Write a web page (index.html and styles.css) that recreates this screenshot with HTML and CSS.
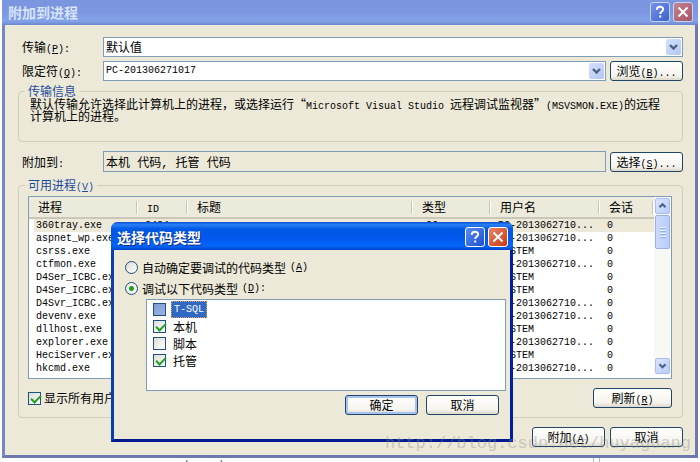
FILE: index.html
```html
<!DOCTYPE html>
<html lang="zh-CN">
<head>
  <meta charset="UTF-8">
  <meta name="viewport" content="width=device-width, initial-scale=1.0">
  <title>附加到进程</title>
  <link rel="stylesheet" href="styles.css">
</head>
<body>
  <main class="window">
    <header class="titlebar">
      <h1>附加到进程</h1>
      <button class="caption help" aria-label="帮助"><svg viewBox="0 0 20 20"><path d="M6.5 7.5C6.5 3 13.5 3 13.5 7.2C13.5 9.5 10.2 9.5 10.2 12.2M10.2 14V16.2"/></svg></button>
      <button class="caption close" aria-label="关闭"><svg viewBox="0 0 20 20"><path d="M5 5L15 15M15 5L5 15"/></svg></button>
    </header>

    <div class="content">
      <div class="form">
        <label for="transport">传输<span class="en">(<u>P</u>):</span></label>
        <div class="combo wide">
          <select id="transport"><option>默认值</option></select>
          <span class="arrow"><svg viewBox="0 0 15 16"><path d="M4 6L7.5 9.5L11 6"/></svg></span>
        </div>
        <label for="qualifier">限定符<span class="en">(<u>Q</u>):</span></label>
        <div class="combo">
          <select id="qualifier" class="en"><option>PC-201306271017</option></select>
          <span class="arrow"><svg viewBox="0 0 15 16"><path d="M4 6L7.5 9.5L11 6"/></svg></span>
        </div>
        <button class="btn">浏览<span class="en">(<u>B</u>)...</span></button>
      </div>

      <fieldset class="info">
        <legend>传输信息</legend>
        <p>默认传输允许选择此计算机上的进程，或选择运行“<span class="en">Microsoft Visual Studio </span>远程调试监视器”<span class="en">(MSVSMON.EXE)</span>的远程<br>计算机上的进程。</p>
      </fieldset>

      <div class="form attach">
        <label for="attach">附加到<span class="en">:</span></label>
        <input id="attach" type="text" value="本机 代码, 托管 代码" readonly>
        <button class="btn">选择<span class="en">(<u>S</u>)...</span></button>
      </div>

      <fieldset class="processes">
        <legend>可用进程<span class="en">(<u>V</u>)</span></legend>
        <div class="list">
          <table>
            <colgroup><col class="c-name"><col class="c-id"><col><col class="c-type"><col class="c-user"><col class="c-session"></colgroup>
            <thead>
              <tr><th>进程</th><th><span class="en">ID</span></th><th>标题</th><th>类型</th><th>用户名</th><th>会话</th></tr>
            </thead>
            <tbody class="en">
              <tr class="current"><td>360tray.exe</td><td>2484</td><td></td><td>x86</td><td>PC-2013062710...</td><td>0</td></tr>
              <tr><td>aspnet_wp.exe</td><td></td><td></td><td></td><td>PC-2013062710...</td><td>0</td></tr>
              <tr><td>csrss.exe</td><td></td><td></td><td></td><td>SYSTEM</td><td>0</td></tr>
              <tr><td>ctfmon.exe</td><td></td><td></td><td></td><td>PC-2013062710...</td><td>0</td></tr>
              <tr><td>D4Ser_ICBC.exe</td><td></td><td></td><td></td><td>SYSTEM</td><td>0</td></tr>
              <tr><td>D4Ser_ICBC.exe</td><td></td><td></td><td></td><td>SYSTEM</td><td>0</td></tr>
              <tr><td>D4Svr_ICBC.exe</td><td></td><td></td><td></td><td>PC-2013062710...</td><td>0</td></tr>
              <tr><td>devenv.exe</td><td></td><td></td><td></td><td>PC-2013062710...</td><td>0</td></tr>
              <tr><td>dllhost.exe</td><td></td><td></td><td></td><td>SYSTEM</td><td>0</td></tr>
              <tr><td>explorer.exe</td><td></td><td></td><td></td><td>PC-2013062710...</td><td>0</td></tr>
              <tr><td>HeciServer.exe</td><td></td><td></td><td></td><td>SYSTEM</td><td>0</td></tr>
              <tr><td>hkcmd.exe</td><td></td><td></td><td></td><td>PC-2013062710...</td><td>0</td></tr>
            </tbody>
          </table>
          <div class="scrollbar">
            <button class="scroll-btn" aria-label="向上"><svg viewBox="0 0 15 16"><path d="M4 9.5L7.5 6L11 9.5"/></svg></button>
            <div class="thumb"><i></i><i></i><i></i><i></i></div>
            <button class="scroll-btn down" aria-label="向下"><svg viewBox="0 0 15 16"><path d="M4 6L7.5 9.5L11 6"/></svg></button>
          </div>
        </div>
        <div class="list-actions">
          <label class="check"><input type="checkbox" checked>显示所有用户</label>
          <button class="btn refresh">刷新<span class="en">(<u>R</u>)</span></button>
        </div>
      </fieldset>

      <div class="footer">
        <button class="btn">附加<span class="en">(<u>A</u>)</span></button>
        <button class="btn">取消</button>
      </div>
    </div>
  </main>

  <div class="behind"><span>(</span><span>)</span><i></i></div>

  <section class="dialog" role="dialog" aria-labelledby="dialog-title">
    <header class="titlebar active">
      <h2 id="dialog-title">选择代码类型</h2>
      <button class="caption help" aria-label="帮助"><svg viewBox="0 0 20 20"><path d="M6.5 7.5C6.5 3 13.5 3 13.5 7.2C13.5 9.5 10.2 9.5 10.2 12.2M10.2 14V16.2"/></svg></button>
      <button class="caption close" aria-label="关闭"><svg viewBox="0 0 20 20"><path d="M5 5L15 15M15 5L5 15"/></svg></button>
    </header>
    <div class="dialog-body">
      <label class="radio"><input type="radio" name="mode">自动确定要调试的代码类型<span class="en">(<u>A</u>)</span></label>
      <label class="radio"><input type="radio" name="mode" checked>调试以下代码类型<span class="en">(<u>D</u>):</span></label>
      <div class="types">
        <label class="check selected"><input type="checkbox"><span class="en">T-SQL</span></label>
        <label class="check"><input type="checkbox" checked>本机</label>
        <label class="check"><input type="checkbox">脚本</label>
        <label class="check"><input type="checkbox" checked>托管</label>
      </div>
      <div class="dialog-actions">
        <button class="btn default">确定</button>
        <button class="btn">取消</button>
      </div>
    </div>
  </section>

  <div class="watermark">http://blog.csdn.net/huyaguang</div>
</body>
</html>
```
FILE: styles.css
```css
* {
  box-sizing: border-box;
}

body {
  margin: 0;
  background: #fff;
  color: #000;
  font: 12px/14px "Noto Sans CJK SC", sans-serif;
  overflow: hidden;
}

button, select, input {
  font: inherit;
  color: inherit;
  margin: 0;
}

.en {
  font-family: "Liberation Mono", monospace;
  font-size: 10px;
  white-space: pre-wrap;
}

span.en {
  line-height: 0;
}

svg {
  display: block;
  width: 100%;
  height: 100%;
  fill: none;
}

/* main window */
.window {
  margin: 0 2px;
  background: #ece9d8;
  border: 3px solid #7388c4;
  border-top: 0;
  border-right-color: #7377ad;
  border-bottom-color: #6c78b0;
}

.titlebar {
  display: flex;
  align-items: center;
  gap: 3px;
  height: 25px;
  margin: 0 -3px;
  padding: 0 5px 2px 6px;
  background: linear-gradient(#7a96df, #7d96e0 45%, #82a2e8 85%, #6f86cb);
}

.titlebar h1,
.titlebar h2 {
  flex: 1;
  margin: 0;
  font-size: 14px;
  line-height: 20px;
  font-weight: bold;
  color: #d8e4f8;
}

.caption {
  width: 20px;
  height: 20px;
  padding: 0;
  border: 1px solid #c4d4f6;
  border-radius: 3px;
  background: linear-gradient(135deg, #7592e8, #3a62cf);
}

.caption path {
  stroke: #fff;
  stroke-width: 2.2;
}

.caption.close {
  background: linear-gradient(135deg, #c48390, #a85465);
}

.content {
  padding: 12px 12px 8px 13px;
}

.form {
  display: grid;
  grid-template-columns: 81px 1fr 73px;
  gap: 4px;
  align-items: center;
}

.form label {
  padding-left: 4px;
}

.combo {
  position: relative;
  height: 20px;
}

.combo.wide {
  grid-column: span 2;
}

.combo select {
  display: block;
  width: 100%;
  height: 20px;
  padding: 0 20px 0 2px;
  appearance: none;
  background: #fff;
  border: 1px solid #7f9db9;
  border-radius: 0;
}

.arrow {
  position: absolute;
  top: 2px;
  right: 2px;
  width: 15px;
  height: 16px;
  border-radius: 2px;
  background: linear-gradient(135deg, #d6e2fd, #b2c6f2);
  pointer-events: none;
}

.arrow path,
.scroll-btn path {
  stroke: #4d6185;
  stroke-width: 2.4;
}

.btn {
  width: 73px;
  height: 20px;
  padding: 0;
  line-height: 16px;
  border: 1px solid #1f4568;
  border-radius: 3px;
  background: linear-gradient(#fff, #f5f4ee 75%, #dcd8cb);
  white-space: nowrap;
}

.btn.default {
  box-shadow: inset 0 0 0 2px #a9c2f0;
}

fieldset {
  min-width: 0;
  margin: 3px 0 0;
  padding: 0 10px 9px 9px;
  border: 1px solid #d0cfbb;
  border-radius: 4px;
}

legend {
  margin-left: -3px;
  padding: 0 3px;
  color: #1c4c9c;
}

.info p {
  margin: 0 0 10px 2px;
  line-height: 12px;
  white-space: nowrap;
}

.attach {
  margin-top: 9px;
}

.attach input {
  width: 100%;
  height: 21px;
  padding: 0 2px;
  border: 1px solid #7f9db9;
  border-radius: 0;
  background: #ece9d8;
  font-family: "Liberation Mono", "Noto Sans CJK SC", monospace;
}

.processes {
  margin-top: 6px;
}

.list {
  display: flex;
  margin-top: 4px;
  padding-bottom: 3px;
  border: 1px solid #7f9db9;
  background: #fff;
}

table {
  flex: 1;
  width: 100%;
  table-layout: fixed;
  border-collapse: separate;
  border-spacing: 0;
}

.c-name { width: 109px; }
.c-id { width: 50px; }
.c-type { width: 78px; }
.c-user { width: 109px; }
.c-session { width: 54px; }

th {
  height: 22px;
  padding: 0 0 0 9px;
  text-align: left;
  font-weight: normal;
  background: linear-gradient(90deg, transparent calc(100% - 2px), #c7c5b2 calc(100% - 2px), #c7c5b2 calc(100% - 1px), #fff calc(100% - 1px)) 0 4px / 100% 13px no-repeat #ebeadb;
  border-bottom: 2px solid #cbc7b8;
}

td {
  height: 13px;
  padding: 0 0 0 7px;
  line-height: 13px;
  white-space: nowrap;
  overflow: hidden;
}

td:first-child {
  border-left: 5px solid #fff;
  padding-left: 2px;
}

.current td {
  background: #ece9d8;
}

.scrollbar {
  display: flex;
  flex-direction: column;
  width: 17px;
  padding: 1px;
  background: #f8f8f4;
}

.scroll-btn {
  width: 15px;
  height: 16px;
  padding: 0;
  border: 1px solid #a9bfee;
  border-radius: 2px;
  background: linear-gradient(135deg, #dbe6ff, #b8ccf5);
}

.scroll-btn.down {
  margin-top: auto;
}

.thumb {
  display: flex;
  flex-direction: column;
  align-items: center;
  justify-content: center;
  gap: 1px;
  height: 34px;
  margin-top: 1px;
  border: 1px solid #98b0e4;
  border-radius: 2px;
  background: linear-gradient(90deg, #cbdafd, #bacdf8);
}

.thumb i {
  width: 6px;
  height: 2px;
  border-top: 1px solid #eef4fe;
  border-bottom: 1px solid #8cb0f8;
}

.list-actions {
  display: flex;
  justify-content: space-between;
  align-items: center;
  margin-top: 9px;
}

.btn.refresh {
  width: 79px;
}

.footer {
  display: flex;
  justify-content: flex-end;
  gap: 5px;
  margin-top: 9px;
}

/* check boxes and radios */
.check,
.radio {
  display: flex;
  align-items: center;
}

.check {
  gap: 3px;
}

.check input,
.radio input {
  appearance: none;
  flex: none;
  width: 13px;
  height: 13px;
  border: 1px solid #1c5180;
  background: linear-gradient(135deg, #dcdcd7, #fff);
}

.check input:checked::before {
  content: "";
  display: block;
  width: 8px;
  height: 4px;
  margin: 2px 0 0 2px;
  border-left: 2px solid #21a121;
  border-bottom: 2px solid #21a121;
  transform: rotate(-45deg);
}

.radio {
  height: 21px;
  gap: 4px;
}

.radio input {
  border-radius: 50%;
}

.radio input:checked {
  background: radial-gradient(circle, #21a121 2px, #f2f2ee 3px);
}

/* code type dialog */
.dialog {
  position: absolute;
  left: 111px;
  top: 222px;
  width: 402px;
  border: 3px solid #0a3cb4;
  border-top: 0;
  border-right-color: #001ea0;
  border-bottom-color: #001a90;
  border-radius: 7px 7px 0 0;
  background: #ece9d8;
}

.titlebar.active {
  height: 28px;
  padding: 2px 5px 0 6px;
  border-radius: 7px 7px 0 0;
  background: linear-gradient(#0a4fd0, #2a80f8 10%, #0058e4 25%, #0059ee 60%, #0466fc 85%, #0046cc);
}

.titlebar.active h2 {
  color: #fff;
  text-shadow: 1px 1px #0f2f80;
}

.titlebar.active .caption {
  border-color: #fff;
  background: linear-gradient(135deg, #5a8bf4, #1d50d0);
}

.titlebar.active .close {
  background: linear-gradient(135deg, #ea8464, #c93a14);
}

.dialog-body {
  padding: 7px 4px 24px 11px;
}

.types {
  margin-left: 21px;
  padding: 1px 6px 21px;
  border: 1px solid #7f9db9;
  background: #fff;
}

.types .check {
  height: 17px;
  gap: 7px;
}

.types .selected {
  gap: 5px;
}

.selected input {
  background: linear-gradient(135deg, #7c9ad4, #9cb5e4);
}

.selected .en {
  padding: 0 2px;
  line-height: 15px;
  border: 1px dotted #d8a060;
  background: #316ac5;
  color: #fff;
}

.dialog-actions {
  display: flex;
  justify-content: flex-end;
  gap: 8px;
  margin: 4px 7px 0 0;
}

/* strip of the page under the window */
.behind {
  display: flex;
  height: 5px;
  gap: 32px;
  padding-left: 184px;
  overflow: hidden;
}

.behind i {
  width: 7px;
  margin-left: auto;
  margin-right: 100px;
  border: solid #b5b5b5;
  border-width: 0 1px;
}

.watermark {
  position: absolute;
  right: 9px;
  bottom: 8px;
  font: 17px/20px "Liberation Mono", monospace;
  color: rgba(140, 140, 140, 0.4);
  pointer-events: none;
}
```
